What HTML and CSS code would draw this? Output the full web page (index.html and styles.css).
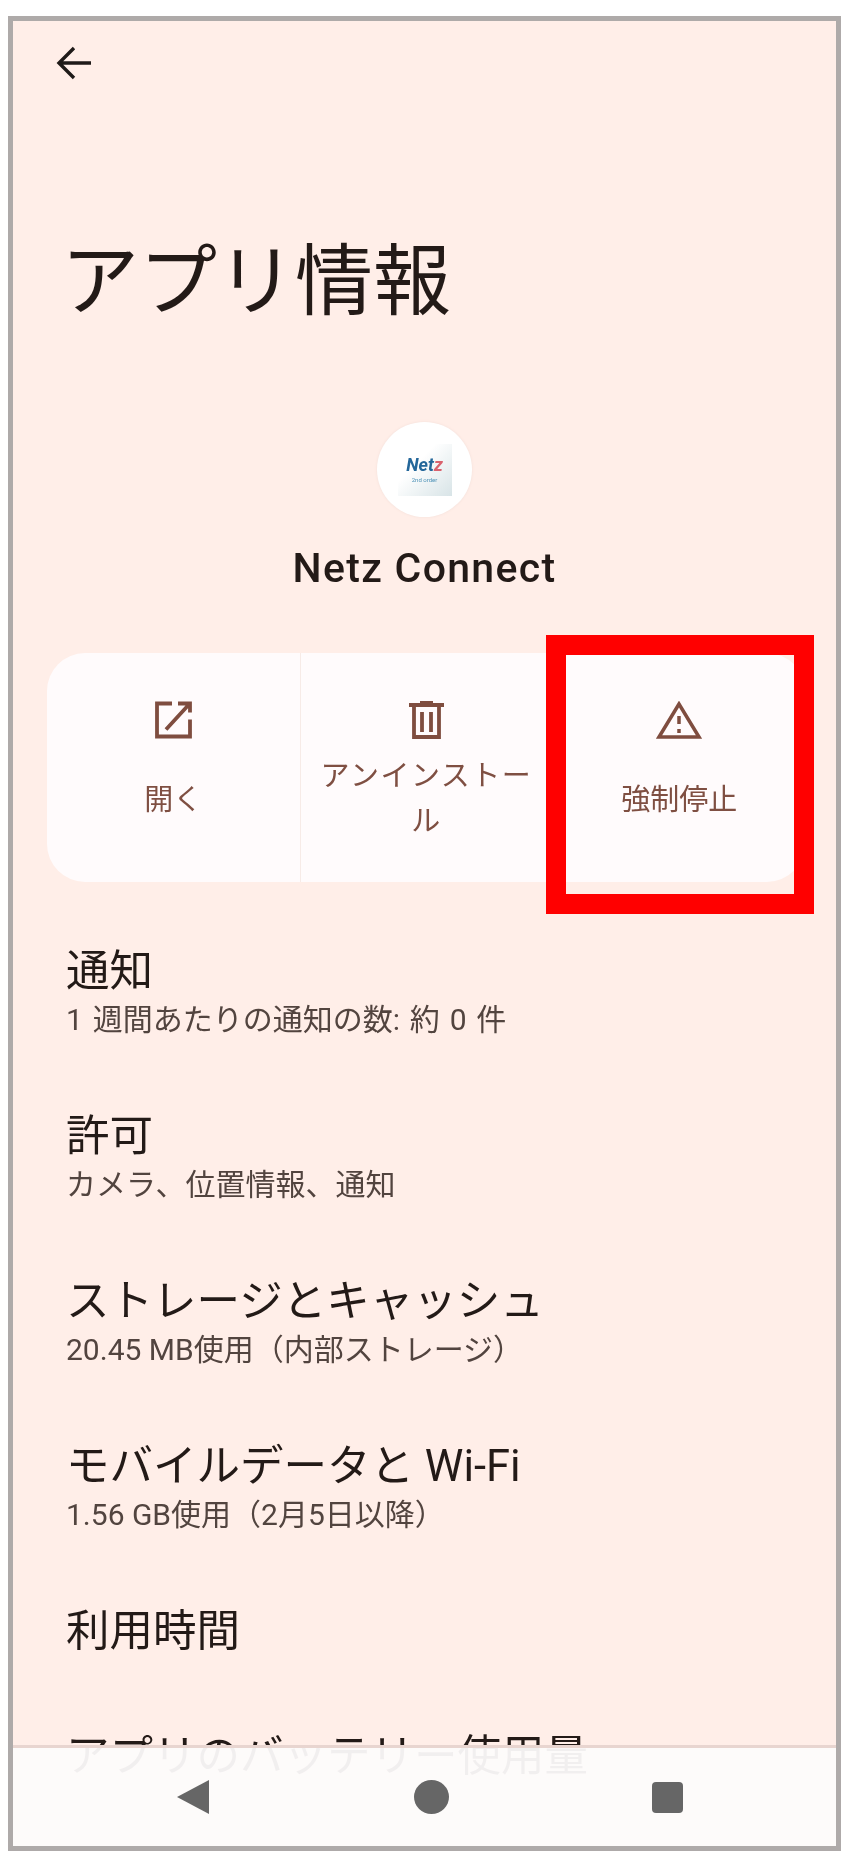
FILE: index.html
```html
<!DOCTYPE html>
<html lang="ja">
<head>
<meta charset="utf-8">
<title>アプリ情報</title>
<link rel="stylesheet" href="styles.css">
</head>
<body>
<div class="frame">
  <main class="screen">
    <div class="topbar">
      <svg class="back" viewBox="0 0 38 36"><path d="M36 18H4M19 3 4 18l15 15"/></svg>
    </div>
    <h1 class="title">アプリ情報</h1>
    <div class="app">
      <div class="app-icon">
        <div class="logo"><span class="logo-name">Net<span class="logo-accent">z</span></span><span class="logo-sub">2nd order</span></div>
      </div>
      <div class="app-name">Netz Connect</div>
    </div>
    <div class="actions-wrap">
      <div class="actions">
        <div class="action">
          <svg class="icon icon-open" viewBox="0 0 37 37"><path d="M17 2H2v33h33V18M23 2h12v9M11 28 33 4"/></svg>
          <div class="label">開く</div>
        </div>
        <div class="action">
          <svg class="icon icon-trash" viewBox="0 0 35 38"><path d="M5 6v30h25V6M0 4h35M11 2h13M13 11v20M22 11v20"/></svg>
          <div class="label label-two">アンインストール</div>
        </div>
        <div class="action">
          <svg class="icon icon-warn" viewBox="0 0 46 38"><path d="M23 3 3 36h40ZM23 15v8M23 28v4"/></svg>
          <div class="label">強制停止</div>
        </div>
      </div>
      <div class="highlight"></div>
    </div>
    <section class="list">
      <div class="row"><div class="row-title">通知</div><div class="row-sub row-sub-spaced">1 週間あたりの通知の数: 約 0 件</div></div>
      <div class="row"><div class="row-title">許可</div><div class="row-sub">カメラ、位置情報、通知</div></div>
      <div class="row"><div class="row-title">ストレージとキャッシュ</div><div class="row-sub">20.45 MB使用（内部ストレージ）</div></div>
      <div class="row"><div class="row-title">モバイルデータと Wi-Fi</div><div class="row-sub">1.56 GB使用（2月5日以降）</div></div>
      <div class="row row-single"><div class="row-title">利用時間</div></div>
      <div class="row row-single"><div class="row-title">アプリのバッテリー使用量</div></div>
    </section>
    <nav class="navbar">
      <svg class="nav-back" viewBox="0 0 32 34"><path d="M32 0v34L0 17Z"/></svg>
      <div class="nav-home"></div>
      <div class="nav-recent"></div>
    </nav>
  </main>
</div>
</body>
</html>
```
FILE: styles.css
```css
* { box-sizing: border-box; }
html, body { margin: 0; padding: 0; background: #fff; }
body {
  width: 848px;
  height: 1854px;
  overflow: hidden;
  padding: 16px 7px 3px 8px;
  font-family: Roboto, "Noto Sans CJK JP", sans-serif;
  color: #231a17;
}
.frame {
  width: 833px;
  height: 1835px;
  border: 5px solid #aeaaa9;
}
.screen {
  position: relative;
  height: 100%;
  overflow: hidden;
  background: #ffeee8;
  filter: blur(.4px);
}
.topbar { height: 60px; padding: 24px 0 0 42px; }
.back { display: block; width: 38px; height: 36px; fill: none; stroke: #1f1a18; stroke-width: 3.4; }
.title {
  margin: 159px 0 0 48px;
  font-size: 78px;
  line-height: 86px;
  font-weight: 400;
  white-space: nowrap;
}
.app { display: flex; flex-direction: column; align-items: center; padding-top: 96px; }
.app-icon {
  width: 95px;
  height: 95px;
  border-radius: 50%;
  background: #fff;
  box-shadow: 0 0 3px #f3dfd9;
  display: flex;
  align-items: center;
  justify-content: center;
}
.logo {
  width: 54px;
  height: 52px;
  background: linear-gradient(135deg, #fff 35%, #d8e4e7);
  display: flex;
  flex-direction: column;
  align-items: center;
  padding-top: 13px;
}
.logo-name { font-size: 18px; line-height: 16px; font-style: italic; font-weight: 700; color: #24679a; }
.logo-accent { color: #d9626e; }
.logo-sub { font-size: 6px; line-height: 7px; margin-top: 3px; color: #4f93b8; white-space: nowrap; }
.app-name { margin-top: 27px; font-size: 41px; line-height: 48px; font-weight: 500; letter-spacing: 1.3px; }
.actions-wrap { position: relative; margin: 61px 0 0 34px; width: 758px; }
.actions {
  display: grid;
  grid-template-columns: repeat(3, 1fr);
  height: 229px;
  background: #fffbfc;
  border-radius: 38px;
}
.action {
  display: flex;
  flex-direction: column;
  align-items: center;
  padding-top: 48px;
  color: #7f4f42;
  border-left: 1px solid #f7ebe7;
}
.action:first-child { border-left: 0; }
.icon { display: block; height: 38px; fill: none; stroke: #7f4d3f; stroke-width: 3.8; }
.icon-open { width: 37px; }
.icon-trash { width: 35px; }
.icon-warn { width: 46px; stroke-width: 3.5; }
.label {
  margin-top: 39px;
  font-size: 29px;
  line-height: 45px;
  text-align: center;
  padding: 0 12px;
}
.label-two { margin-top: 15px; letter-spacing: 1.5px; }
.highlight {
  position: absolute;
  left: 499px;
  top: -18px;
  width: 268px;
  height: 279px;
  border: 20px solid #ff0000;
}
.list { margin-top: 62px; padding-left: 53px; }
.row { height: 165px; }
.row-single { height: 125px; }
.row-title { font-size: 43.5px; line-height: 56px; white-space: nowrap; }
.row-sub { margin-top: 2px; font-size: 30px; line-height: 36px; color: #52443f; white-space: nowrap; }
.row-sub-spaced { word-spacing: 2.4px; }
.navbar {
  position: absolute;
  left: 0;
  right: 0;
  bottom: 0;
  height: 101px;
  background: rgba(253, 251, 251, .95);
  border-top: 3px solid #e8d5d0;
}
.nav-back, .nav-home, .nav-recent { position: absolute; top: 32px; }
.nav-back { left: 164px; width: 32px; height: 34px; fill: #666; }
.nav-home { left: 401px; width: 35px; height: 34px; border-radius: 50%; background: #666; }
.nav-recent { left: 639px; top: 34px; width: 31px; height: 31px; border-radius: 4px; background: #666; }
```
